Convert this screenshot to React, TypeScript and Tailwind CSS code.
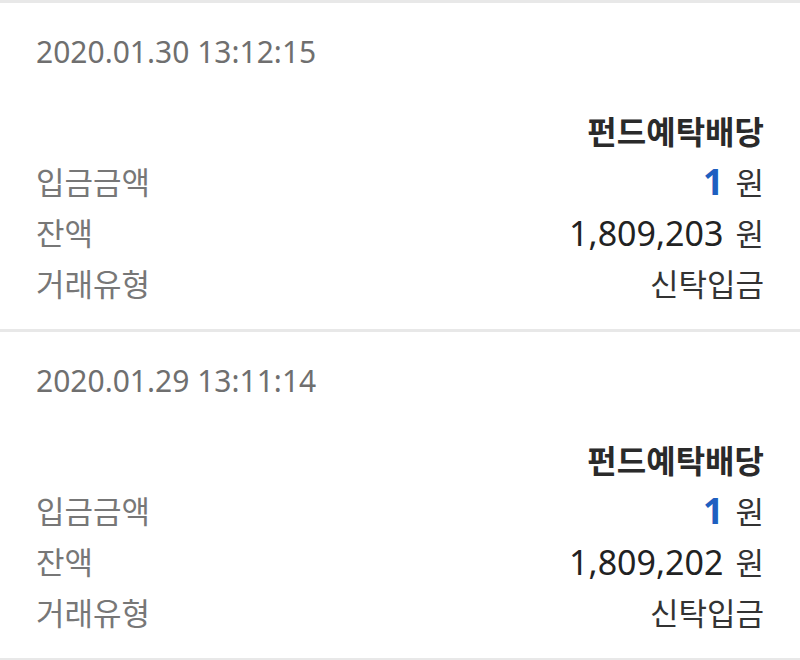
const rows = [
  { date: "2020.01.30 13:12:15", balance: "1,809,203" },
  { date: "2020.01.29 13:11:14", balance: "1,809,202" },
];

function Entry({ date, balance }: { date: string; balance: string }) {
  return (
    <section className="border-b-[3px] border-[#e8e8e8] px-9 pt-6 pb-5">
      <div className="text-[30px] leading-[50px] text-[#6f6f6f]">{date}</div>
      <div className="mt-[30px] grid grid-cols-[auto_1fr] text-[31px] leading-[50px]">
        <div />
        <div className="text-right text-[32px] font-bold text-[#2a2a2a]">펀드예탁배당</div>
        <div className="text-[#777]">입금금액</div>
        <div className="text-right text-[#222]">
          <span className="text-[36px] font-bold text-[#1e5fc0]">1</span>
          <span className="ml-3 text-[#333]">원</span>
        </div>
        <div className="text-[#777]">잔액</div>
        <div className="text-right text-[#222]">
          <span className="text-[34px]">{balance}</span>
          <span className="ml-3 text-[#333]">원</span>
        </div>
        <div className="text-[#777]">거래유형</div>
        <div className="text-right text-[#333]">신탁입금</div>
      </div>
    </section>
  );
}

export default function App() {
  return (
    <main
      className="min-h-screen w-[800px] bg-white border-t-[3px] border-[#e8e8e8]"
      style={{ fontFamily: '"Noto Sans", "Noto Sans CJK KR", sans-serif' }}
    >
      {rows.map((r) => (
        <Entry key={r.date} date={r.date} balance={r.balance} />
      ))}
    </main>
  );
}
